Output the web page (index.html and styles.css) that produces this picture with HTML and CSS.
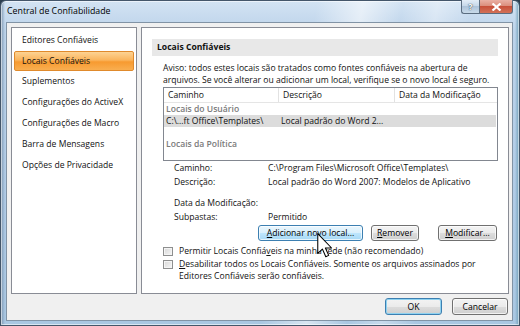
FILE: index.html
```html
<!DOCTYPE html>
<html lang="pt-BR">
<head>
    <meta charset="UTF-8" />
    <title>Central de Confiabilidade</title>
    <link rel="stylesheet" href="styles.css">
</head>
<body>

    <div class="window">
        <div class="titlebar">
            <span class="title">Central de Confiabilidade</span>
            <div class="caption-buttons">
                <span class="cap-btn help">?</span>
                <span class="cap-btn close">
                    <svg width="11" height="8" viewBox="0 0 11 8"><path d="M1.5 0.5 L9.5 7.5 M9.5 0.5 L1.5 7.5" stroke="#fff" stroke-width="2.2" /></svg>
                </span>
            </div>
        </div>

        <div class="client">
            <div class="panes">
                <!-- left category list -->
                <ul class="nav">
                    <li>Editores Confiáveis</li>
                    <li class="selected">Locais Confiáveis</li>
                    <li>Suplementos</li>
                    <li>Configurações do ActiveX</li>
                    <li>Configurações de Macro</li>
                    <li>Barra de Mensagens</li>
                    <li>Opções de Privacidade</li>
                </ul>

                <div class="content">
                    <div class="section-title">Locais Confiáveis</div>
                    <div class="section-body">
                        <p class="notice">Aviso: todos estes locais são tratados como fontes confiáveis na abertura de<br>arquivos. Se você alterar ou adicionar um local, verifique se o novo local é seguro.</p>

                        <div class="listview">
                            <div class="lv-header">
                                <span>Caminho</span>
                                <span>Descrição</span>
                                <span>Data da Modificação</span>
                            </div>
                            <div class="lv-group">Locais do Usuário</div>
                            <div class="lv-row selected">
                                <span>C:\...ft Office\Templates\</span>
                                <span>Local padrão do Word 2...</span>
                                <span></span>
                            </div>
                            <div class="lv-group policy">Locais da Política</div>
                        </div>

                        <div class="details">
                            <span>Caminho:</span><span>C:\Program Files\Microsoft Office\Templates\</span>
                            <span>Descrição:</span><span>Local padrão do Word 2007: Modelos de Aplicativo</span>
                            <span class="spaced">Data da Modificação:</span><span class="spaced"></span>
                            <span>Subpastas:</span><span>Permitido</span>
                        </div>

                        <div class="actions">
                            <button class="btn hover btn-add"><u>A</u>dicionar novo local...</button>
                            <button class="btn btn-remove"><u>R</u>emover</button>
                            <button class="btn btn-modify"><u>M</u>odificar...</button>
                        </div>

                        <label class="check">
                            <span class="box"></span>
                            <span>Permitir Locais Confiá<u>v</u>eis na minha rede (não recomendado)</span>
                        </label>
                        <label class="check">
                            <span class="box"></span>
                            <span><u>D</u>esabilitar todos os Locais Confiáveis. Somente os arquivos assinados por<br>Editores Confiáveis serão confiáveis.</span>
                        </label>
                    </div>
                </div>
            </div>

            <div class="footer">
                <button class="btn default btn-ok">OK</button>
                <button class="btn btn-cancel">Cancelar</button>
            </div>
        </div>

        <!-- mouse pointer over the add button -->
        <svg class="cursor" width="16" height="25" viewBox="0 0 12 19">
            <path d="M0.5 0.5 L0.5 15.5 L4 12.2 L6.6 18 L8.8 17 L6.3 11.4 L11 11.4 Z" fill="#fff" stroke="#000" stroke-width="0.8" stroke-linejoin="round" />
        </svg>
    </div>

</body>
</html>
```

FILE: styles.css
```css
/* Vista style dialog colours */
:root {
    --face: #f0f0f0;
    --panel-border: #898c95;
    --text: #111;
    --muted: #7b7b7b;
}

* {
    margin: 0;
    padding: 0;
    box-sizing: border-box;
}

html, body {
    width: 520px;
    height: 326px;
    overflow: hidden;
    font-family: 'Open Sans', 'Noto Sans', sans-serif;
    font-size: 8.6px;
    color: var(--text);
    background: #2c3e4f;
}

.window {
    position: relative;
    width: 520px;
    height: 326px;
    border: 1px solid #44566a;
    border-radius: 6px 6px 0 0;
    background:
        linear-gradient(100deg, transparent 55%, rgba(255, 255, 255, 0.55) 63%, transparent 70%, rgba(255, 255, 255, 0.35) 76%, transparent 82%),
        linear-gradient(90deg, #7f98b2, transparent 4px, transparent 514px, #6f9fb8),
        linear-gradient(#d3e3f3, #bcd3ea 30px, #b0cbe6 200px, #a9c7e2);
    box-shadow: inset 0 0 0 1px rgba(255, 255, 255, 0.55);
}

/* Title bar */
.titlebar {
    display: flex;
    justify-content: space-between;
    height: 21px;
    padding-left: 6px;
}

.title {
    font-size: 8.8px;
    line-height: 20px;
    color: #000;
}

.caption-buttons {
    display: flex;
    margin-right: 6px;
    margin-top: -1px;
}

.cap-btn {
    display: flex;
    align-items: center;
    justify-content: center;
    height: 14px;
    border: 1px solid #5b6d80;
    border-top: none;
}

.help {
    width: 18px;
    border-right: none;
    border-radius: 0 0 0 3px;
    background: linear-gradient(#e3edf7, #c4d6e8 50%, #aec4da 50%, #c9dae9);
    color: #fff;
    font-weight: 700;
    font-size: 9px;
    text-shadow: 0 0 1px #34475a, 0 0 1px #34475a;
}

.close {
    width: 34px;
    border-radius: 0 0 3px 0;
    background: linear-gradient(#eab0a4, #d98a78 50%, #c8503a 50%, #d27158);
}

/* Client area */
.client {
    margin-left: 5px;
    width: 507px;
    height: 299px;
    border: 1px solid #8193a5;
    background: var(--face);
    padding: 4px 3px 5px 4px;
}

.panes {
    display: flex;
    gap: 4px;
    height: 267px;
}

.nav {
    list-style: none;
    width: 126px;
    border: 1px solid var(--panel-border);
    background: #fff;
    padding-top: 2px;
}

.nav li {
    height: 21px;
    line-height: 19px;
    margin: 0 2px;
    padding-left: 7px;
    border: 1px solid transparent;
    white-space: nowrap;
}

.nav li.selected {
    border-color: #e08a2c;
    border-radius: 2px;
    background: linear-gradient(#fdd393, #fab45c 45%, #f79a30 55%, #f9ae50);
    height: 20px;
}

.content {
    flex: 1;
    border: 1px solid var(--panel-border);
    background: #fff;
}

.section-title {
    margin: 11px 10px 0 10px;
    height: 17px;
    line-height: 17px;
    padding-left: 5px;
    background: #e8e8e8;
    font-weight: 700;
}

.section-body {
    padding: 0 10px 0 21px;
}

.notice {
    margin-top: 6px;
    line-height: 12px;
    white-space: nowrap;
}

/* List view */
.listview {
    margin-top: 1px;
    height: 74px;
    border: 1px solid #828790;
}

.lv-header,
.lv-row {
    display: grid;
    grid-template-columns: 115px 116px 1fr;
}

.lv-header {
    height: 15px;
    line-height: 14px;
    border-bottom: 1px solid #e5e5e5;
}

.lv-header span {
    padding-left: 4px;
    border-right: 1px solid #e2e2e2;
}

.lv-header span:last-child {
    border-right: none;
}

.lv-group {
    line-height: 12px;
    padding-left: 2px;
    color: var(--muted);
    font-weight: 600;
}

.lv-group.policy {
    margin-top: 11px;
}

.lv-row {
    line-height: 12px;
    white-space: nowrap;
}

.lv-row.selected {
    background: #dcdcdc;
    margin-right: 1px;
}

.lv-row span {
    padding-left: 2px;
}

/* Detail fields */
.details {
    display: grid;
    grid-template-columns: 94px 1fr;
    padding-left: 11px;
    line-height: 14px;
    white-space: nowrap;
}

.details .spaced {
    margin-top: 7px;
}

/* Buttons */
.actions {
    display: flex;
    justify-content: flex-end;
    margin-top: 1px;
}

.btn {
    font-family: inherit;
    font-size: 8.6px;
    color: #000;
    height: 16px;
    border: 1px solid #707070;
    border-radius: 3px;
    background: linear-gradient(#f3f3f3, #ebebeb 50%, #dddddd 50%, #cfcfcf);
    box-shadow: inset 0 0 0 1px rgba(255, 255, 255, 0.7);
}

.btn.hover {
    border-color: #3c7fb1;
    background: linear-gradient(#eaf6fd, #d9f0fc 50%, #bee6fd 50%, #a7d9f5);
}

.btn.default {
    border-color: #3c7fb1;
    box-shadow: inset 0 0 0 1px #8fd2f0;
}

.btn-add { width: 105px; }
.btn-remove { width: 48px; margin-left: 8px; }
.btn-modify { width: 59px; margin-left: 19px; margin-right: 1px; }

/* Check boxes */
.check {
    display: flex;
    align-items: flex-start;
    gap: 6px;
    line-height: 12px;
    white-space: nowrap;
}

.check:first-of-type {
    margin-top: 4px;
}

.check + .check {
    margin-top: 1px;
}

.check .box {
    flex: none;
    width: 10px;
    height: 9px;
    margin-top: 2px;
    border: 1px solid #8e8f8f;
    background: linear-gradient(135deg, #d8d8d8, #f6f6f6);
    box-shadow: inset 0 0 0 1px #f4f4f4;
}

/* Footer */
.footer {
    display: flex;
    justify-content: flex-end;
    gap: 10px;
    margin-top: 4px;
    padding-right: 1px;
}

.footer .btn {
    height: 17px;
}

.btn-ok { width: 57px; }
.btn-cancel { width: 56px; }

.cursor {
    position: absolute;
    left: 316px;
    top: 232px;
}
```
